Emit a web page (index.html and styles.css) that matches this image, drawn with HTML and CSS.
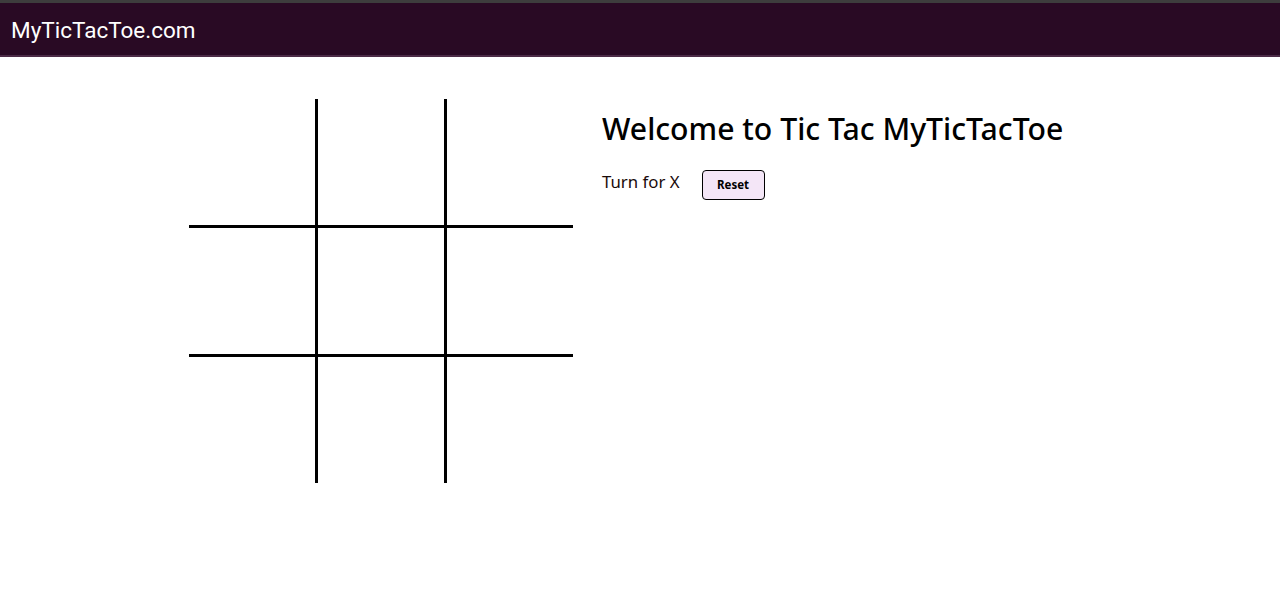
FILE: index.html
```html
<!DOCTYPE html>
<html lang="en">
<head>
<meta charset="utf-8">
<title>MyTicTacToe.com</title>
<link rel="stylesheet" href="styles.css">
</head>
<body>
<div class="topstrip"></div>
<nav class="navbar"><span class="brand">MyTicTacToe.com</span></nav>
<main class="game">
  <div class="board">
    <div class="cell"></div><div class="cell"></div><div class="cell"></div>
    <div class="cell"></div><div class="cell"></div><div class="cell"></div>
    <div class="cell"></div><div class="cell"></div><div class="cell"></div>
  </div>
  <section class="info">
    <h1 class="title">Welcome to Tic Tac MyTicTacToe</h1>
    <div class="status">
      <span class="turn">Turn for X</span>
      <button class="reset">Reset</button>
    </div>
  </section>
</main>
</body>
</html>
```
FILE: styles.css
```css
* { box-sizing: border-box; }
html, body { margin: 0; padding: 0; background: #fff; }
body { font-family: "Noto Sans", "Open Sans", sans-serif; color: #000; }
.topstrip { height: 3px; background: #3d3d3d; }
.navbar {
  height: 54px;
  background: #290a24;
  border-bottom: 2px solid #4b2a46;
  display: flex;
  align-items: center;
  padding: 2px 0 0 11px;
}
.brand {
  font-family: Roboto, "Liberation Sans", sans-serif;
  font-size: 22.5px;
  color: #fff;
}
.game {
  display: flex;
  align-items: flex-start;
  padding: 42px 0 0 189px;
  gap: 29px;
}
.board {
  width: 384px;
  height: 384px;
  display: grid;
  grid-template-columns: repeat(3, 1fr);
  grid-template-rows: repeat(3, 1fr);
  gap: 3px;
  background: #000;
}
.cell { background: #fff; }
.info { padding-top: 10px; }
.title {
  margin: 0;
  font-size: 30.2px;
  font-weight: 500;
  line-height: 40px;
}
.status {
  display: flex;
  align-items: center;
  gap: 22px;
  margin-top: 21px;
}
.turn { font-size: 16.8px; color: #1a0a0a; margin-top: -7px; }
.reset {
  width: 63px;
  height: 30px;
  background: #f4e6f7;
  border: 1.5px solid #000;
  border-radius: 4px;
  font-family: "Noto Sans", sans-serif;
  font-weight: 700;
  font-size: 11.5px;
  color: #000;
  padding: 0 0 2px;
}
```
